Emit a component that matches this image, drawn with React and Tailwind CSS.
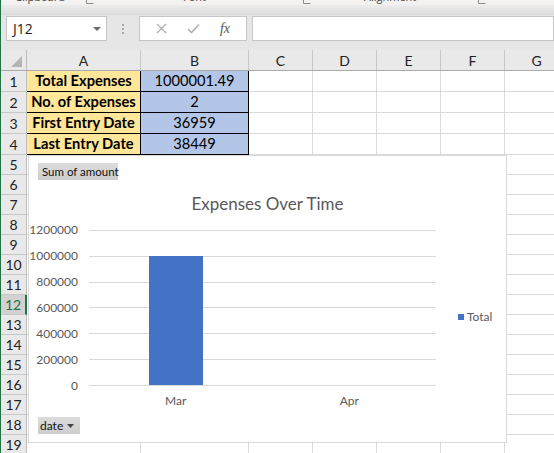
import React from 'react';

const COLS = [
  { name: 'A', w: 'w-[114px]' },
  { name: 'B', w: 'w-[108px]' },
  { name: 'C', w: 'w-[64px]' },
  { name: 'D', w: 'w-[64px]' },
  { name: 'E', w: 'w-[64px]' },
  { name: 'F', w: 'w-[64px]' },
  { name: 'G', w: 'w-[64px]' },
];

const summary = [
  ['Total Expenses', '1000001.49'],
  ['No. of Expenses', '2'],
  ['First Entry Date', '36959'],
  ['Last Entry Date', '38449'],
];

const ticks = ['1200000', '1000000', '800000', '600000', '400000', '200000', '0'];
const series = [
  { label: 'Mar', value: 1000001.49 },
  { label: 'Apr', value: 0 },
];
const MAX = 1200000;

const Launcher = () => (
  <svg width="8" height="4" viewBox="0 0 8 4" className="block shrink-0 mt-[10px]">
    <path d="M0.5 0 V3.5 H7.5" fill="none" stroke="#8a8a8a" strokeWidth="1" />
  </svg>
);

const RowHeader = ({ n, tall }) => {
  const active = n === 12;
  return (
    <div
      className={`w-[26px] shrink-0 flex items-center justify-center border-b border-[#c8c8c8] text-[14px] ${
        tall ? 'h-[21px]' : 'h-[20px]'
      } ${active ? 'bg-[#d2d2d2] text-[#217346] border-r-2 border-r-[#217346]' : 'bg-[#e9e9e9] text-[#222] border-r border-r-[#bdbdbd]'}`}
    >
      {n}
    </div>
  );
};

const Chart = () => (
  <div className="absolute left-[27px] top-[155px] w-[479px] h-[288px] bg-white border border-[#d9d9d9] text-[#595959]">
    <div className="absolute left-[9px] top-[7px] w-[80px] h-[17px] bg-gradient-to-b from-[#dcdcdc] to-[#cdcdcd] text-[11.5px] leading-[17px] text-[#111] pl-[4px] whitespace-nowrap">
      Sum of amount
    </div>

    <div className="absolute left-0 right-0 top-[36px] text-center text-[17px] leading-[24px]">
      Expenses Over Time
    </div>

    <div className="absolute left-0 w-[49px] top-[66px] h-[172px] flex flex-col justify-between text-[12px] leading-[16px] text-right">
      {ticks.map((t) => (
        <div key={t} className="h-[16px]">{t}</div>
      ))}
    </div>

    <div className="absolute left-[60px] top-[74px] w-[347px] h-[156px]">
      <div className="absolute inset-0 flex flex-col justify-between">
        {ticks.map((t) => (
          <div key={t} className="h-px bg-[#d9d9d9]" />
        ))}
      </div>
      <div className="absolute inset-0 flex">
        {series.map((s) => (
          <div key={s.label} className="flex-1 flex items-end justify-center pb-px">
            {s.value > 0 && (
              <div className="w-[54px] bg-[#4472c4]" style={{ height: `${(s.value / MAX) * 155}px` }} />
            )}
          </div>
        ))}
      </div>
    </div>

    <div className="absolute left-[60px] top-[237px] w-[347px] flex text-[12px] leading-[16px]">
      {series.map((s) => (
        <div key={s.label} className="flex-1 text-center">{s.label}</div>
      ))}
    </div>

    <div className="absolute left-[429px] top-[153px] h-[16px] flex items-center gap-[3px] text-[12px]">
      <div className="w-[6px] h-[6px] bg-[#4472c4]" />
      <span>Total</span>
    </div>

    <div className="absolute left-[9px] top-[261px] w-[42px] h-[17px] bg-gradient-to-b from-[#dcdcdc] to-[#cdcdcd] text-[12px] leading-[17px] text-[#111] pl-[2px] flex items-center gap-[4px]">
      <span>date</span>
      <svg width="7" height="4" viewBox="0 0 7 4">
        <path d="M0 0 H7 L3.5 4 Z" fill="#444" />
      </svg>
    </div>
  </div>
);

export default function App() {
  const rows = Array.from({ length: 19 }, (_, i) => i + 1);

  return (
    <div
      className="relative w-[554px] h-[453px] overflow-hidden bg-white border-l border-[#217346] flex flex-col"
      style={{ fontFamily: 'Lato, "Liberation Sans", sans-serif' }}
    >
      {/* ribbon group labels, cut off at the top */}
      <div className="h-[5px] shrink-0 bg-[#f3f2f1] overflow-hidden text-[11px] text-[#444] font-['Open_Sans',sans-serif]">
        <div className="flex items-start w-[553px] mt-[-10px] leading-[14px] whitespace-nowrap">
          <span className="ml-[14px] w-[71px] shrink-0">Clipboard</span>
          <Launcher />
          <span className="ml-[89px] w-[120px] shrink-0">Font</span>
          <Launcher />
          <span className="ml-[53px] w-[114px] shrink-0">Alignment</span>
          <Launcher />
        </div>
      </div>
      <div className="h-[10px] shrink-0 bg-gradient-to-b from-[#ececec] to-[#dcdcdc]" />

      {/* formula bar */}
      <div className="h-[35px] shrink-0 bg-[#e6e6e6] flex items-start pt-[1px]">
        <div className="ml-[5px] w-[101px] h-[25px] bg-white border border-[#c6c6c6] flex items-center justify-between pl-[6px] pr-[5px]">
          <span className="text-[14px] text-[#222] font-['Open_Sans',sans-serif]">J12</span>
          <svg width="8" height="4" viewBox="0 0 8 4">
            <path d="M0 0 H8 L4 4 Z" fill="#6b6b6b" />
          </svg>
        </div>
        <div className="w-[32px] h-[25px] flex flex-col items-center justify-center gap-[2px]">
          <div className="w-[2px] h-[2px] bg-[#a8a8a8]" />
          <div className="w-[2px] h-[2px] bg-[#a8a8a8]" />
          <div className="w-[2px] h-[2px] bg-[#a8a8a8]" />
        </div>
        <div className="w-[108px] h-[25px] bg-white border border-[#c6c6c6] flex items-center justify-around px-[6px]">
          <svg width="11" height="11" viewBox="0 0 11 11">
            <path d="M1 1 L10 10 M10 1 L1 10" stroke="#b0b0b0" strokeWidth="1.3" />
          </svg>
          <svg width="13" height="11" viewBox="0 0 13 11">
            <path d="M1 6 L4.5 9.5 L12 1.5" fill="none" stroke="#b0b0b0" strokeWidth="1.6" />
          </svg>
          <span className="text-[14px] italic text-[#555] font-['Liberation_Serif',serif]">fx</span>
        </div>
        <div className="ml-[5px] flex-1 h-[25px] bg-white border border-[#c6c6c6]" />
      </div>

      {/* column headers */}
      <div className="h-[21px] flex shrink-0 bg-[#e9e9e9] border-b border-[#ababab]">
        <div className="w-[26px] shrink-0 border-r border-[#bdbdbd] flex items-end justify-end pr-[4px] pb-[3px]">
          <svg width="11" height="11" viewBox="0 0 11 11">
            <path d="M11 0 V11 H0 Z" fill="#b4b4b4" />
          </svg>
        </div>
        {COLS.map((c) => (
          <div
            key={c.name}
            className={`${c.w} shrink-0 border-r border-[#c8c8c8] flex items-center justify-center text-[14px] text-[#222]`}
          >
            {c.name}
          </div>
        ))}
      </div>

      {/* grid rows */}
      {rows.map((n) => {
        const data = summary[n - 1];
        const tall = n <= 4;
        return (
          <div key={n} className="flex shrink-0">
            <RowHeader n={n} tall={tall} />
            {COLS.map((c, ci) => {
              if (data && ci < 2) {
                return (
                  <div
                    key={c.name}
                    className={`${c.w} shrink-0 h-[21px] border-r border-b border-black flex items-center justify-center text-[14.67px] text-black ${
                      ci === 0 ? 'bg-[#ffe699] font-bold' : 'bg-[#b4c6e7]'
                    }`}
                  >
                    {data[ci]}
                  </div>
                );
              }
              return (
                <div
                  key={c.name}
                  className={`${c.w} shrink-0 ${tall ? 'h-[21px]' : 'h-[20px]'} border-r border-b border-[#d9d9d9]`}
                />
              );
            })}
          </div>
        );
      })}

      <Chart />
    </div>
  );
}
